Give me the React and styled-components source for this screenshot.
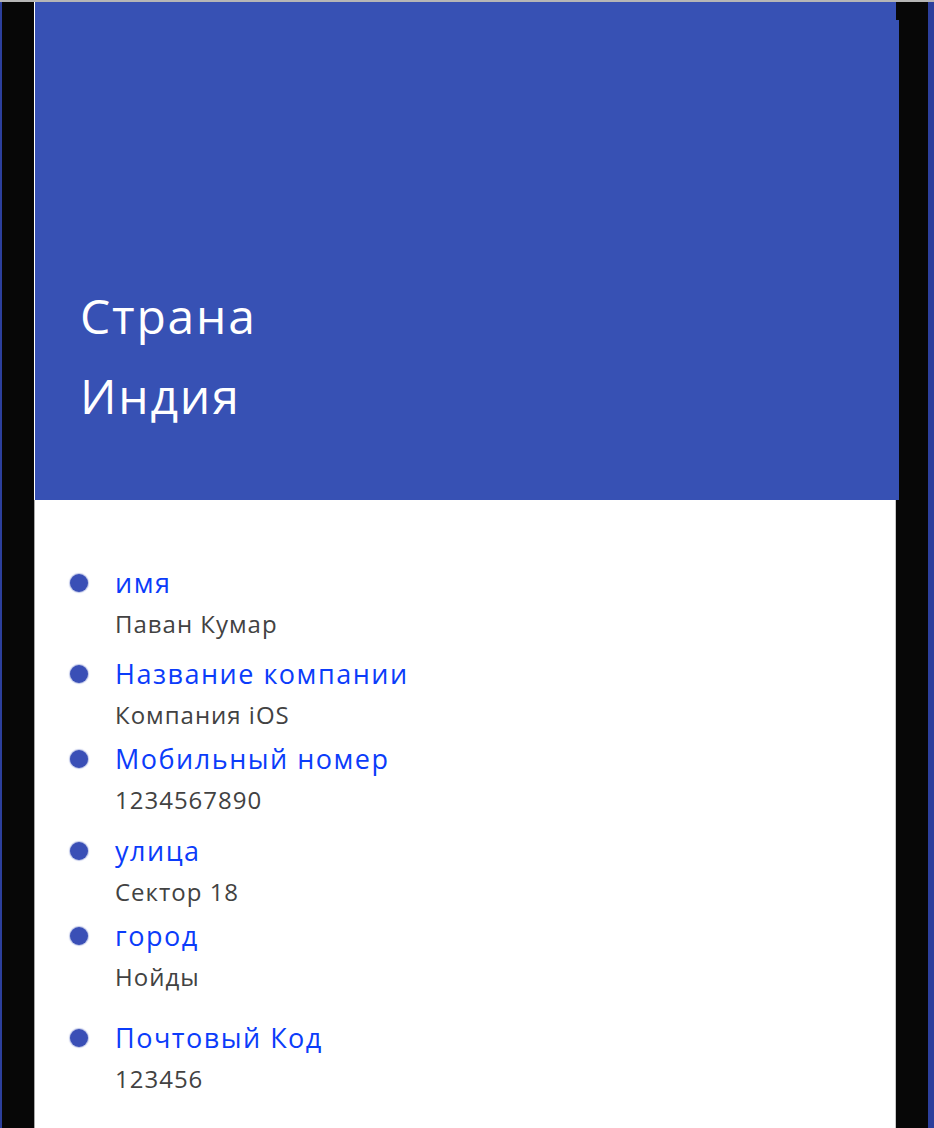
import React from "react";
import styled, { createGlobalStyle } from "styled-components";

const Global = createGlobalStyle`
  html, body { margin: 0; padding: 0; background: #070707; }
  body { font-family: "Open Sans", "Noto Sans", sans-serif; }
`;

const Page = styled.div`
  height: 1128px;
  overflow: hidden;
  display: flex;
  flex-direction: column;
  background: #070707;
`;

const TopLine = styled.div`
  height: 2px;
  background: #b6b6b6;
  flex: none;
`;

const Frame = styled.div`
  flex: 1;
  display: flex;
  min-height: 0;
`;

const EdgeStrip = styled.div`
  width: ${(p) => p.$w}px;
  flex: none;
  background: ${(p) => p.$bg};
`;

const Gutter = styled.div`
  width: 32px;
  flex: none;
  background: #070707;
`;

const Column = styled.div`
  width: 862px;
  flex: none;
  display: flex;
  flex-direction: column;
  background: #ffffff;
`;

const Header = styled.header`
  position: relative;
  height: 498px;
  margin-left: 1px;
  margin-right: -3px;
  background: #3751b4;
  display: flex;
  flex-direction: column;
  justify-content: flex-end;
  padding: 0 0 64px 45px;
  box-sizing: border-box;
  &::after {
    content: "";
    position: absolute;
    top: 0;
    right: 0;
    width: 3px;
    height: 18px;
    background: #070707;
  }
`;

const HeaderLine = styled.div`
  color: #ffffff;
  font-size: 48px;
  line-height: 80px;
  letter-spacing: 1.8px;
`;

const List = styled.ul`
  list-style: none;
  margin: 0;
  padding: 63px 0 0 0;
  flex: 1;
  border-left: 1px solid #a8a8a8;
  border-right: 1px solid #c8c8c8;
`;

const Item = styled.li`
  display: grid;
  grid-template-columns: 80px 1fr;
  margin-top: ${(p) => p.$top}px;
`;

const BulletCell = styled.div`
  height: 40px;
  display: flex;
  align-items: center;
  justify-content: flex-start;
  padding-left: 35px;
`;

const Dot = styled.span`
  width: 18px;
  height: 18px;
  border-radius: 50%;
  background: #3a4fb6;
  box-shadow: 0 0 1px 1px rgba(58, 79, 182, 0.35);
`;

const Texts = styled.div`
  display: flex;
  flex-direction: column;
`;

const Label = styled.div`
  color: #0b3cfa;
  font-size: 27px;
  line-height: 40px;
  letter-spacing: 1.5px;
`;

const Value = styled.div`
  color: #424242;
  font-size: 24px;
  line-height: 42px;
  letter-spacing: 1px;
`;

const items = [
  { label: "имя", value: "Паван Кумар", top: 0 },
  { label: "Название компании", value: "Компания iOS", top: 9 },
  { label: "Мобильный номер", value: "1234567890", top: 3 },
  { label: "улица", value: "Сектор 18", top: 10 },
  { label: "город", value: "Нойды", top: 3 },
  { label: "Почтовый Код", value: "123456", top: 20 },
];

export default function App() {
  return (
    <>
      <Global />
      <Page>
        <TopLine />
        <Frame>
          <EdgeStrip $w={2} $bg="#2c3f9c" />
          <Gutter />
          <Column>
            <Header>
              <HeaderLine>Страна</HeaderLine>
              <HeaderLine>Индия</HeaderLine>
            </Header>
            <List>
              {items.map((it) => (
                <Item key={it.label} $top={it.top}>
                  <BulletCell>
                    <Dot />
                  </BulletCell>
                  <Texts>
                    <Label>{it.label}</Label>
                    <Value>{it.value}</Value>
                  </Texts>
                </Item>
              ))}
            </List>
          </Column>
          <Gutter />
          <EdgeStrip $w={6} $bg="#2c3f9c" />
        </Frame>
      </Page>
    </>
  );
}
